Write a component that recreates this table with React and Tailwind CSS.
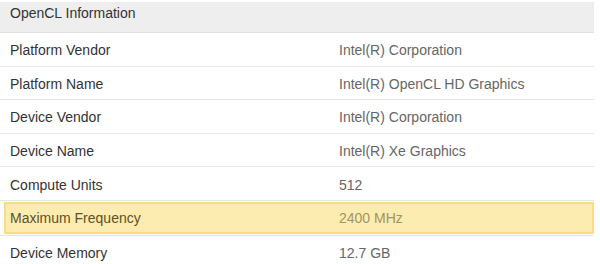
import React from "react";

const rows = [
  { label: "Platform Vendor", value: "Intel(R) Corporation" },
  { label: "Platform Name", value: "Intel(R) OpenCL HD Graphics" },
  { label: "Device Vendor", value: "Intel(R) Corporation" },
  { label: "Device Name", value: "Intel(R) Xe Graphics" },
  { label: "Compute Units", value: "512" },
  { label: "Maximum Frequency", value: "2400 MHz", highlight: true },
  { label: "Device Memory", value: "12.7 GB" },
];

const App = () => {
  return (
    <div
      className="w-[600px] h-[264px] overflow-hidden bg-white text-[14px]"
      style={{ fontFamily: '"Liberation Sans", Arial, sans-serif' }}
    >
      <div className="w-[594px] pt-[2px]">
        {/* Header */}
        <div className="h-[31px] bg-[#eeeeee] px-[10px] pt-[1px] text-[#333333] border-b border-[#e2e2e2]">
          OpenCL Information
        </div>

        {/* Rows */}
        {rows.map((row) =>
          row.highlight ? (
            <div key={row.label} className="h-[35px] py-[1px] border-b border-[#e6e6e6]">
              <div className="h-full ml-[4px] pt-[2px] flex items-center bg-[#fdecb0] border-2 border-[#f9dc86]">
                <span className="w-[333px] pl-[4px] text-[#5e5128]">{row.label}</span>
                <span className="text-[#a39463]">{row.value}</span>
              </div>
            </div>
          ) : (
            <div
              key={row.label}
              className="h-[33.6px] pt-[3px] flex items-center border-b border-[#e6e6e6]"
            >
              <span className="w-[339px] pl-[10px] text-[#333333]">{row.label}</span>
              <span className="text-[#666666]">{row.value}</span>
            </div>
          )
        )}
      </div>
    </div>
  );
};

export default App;
